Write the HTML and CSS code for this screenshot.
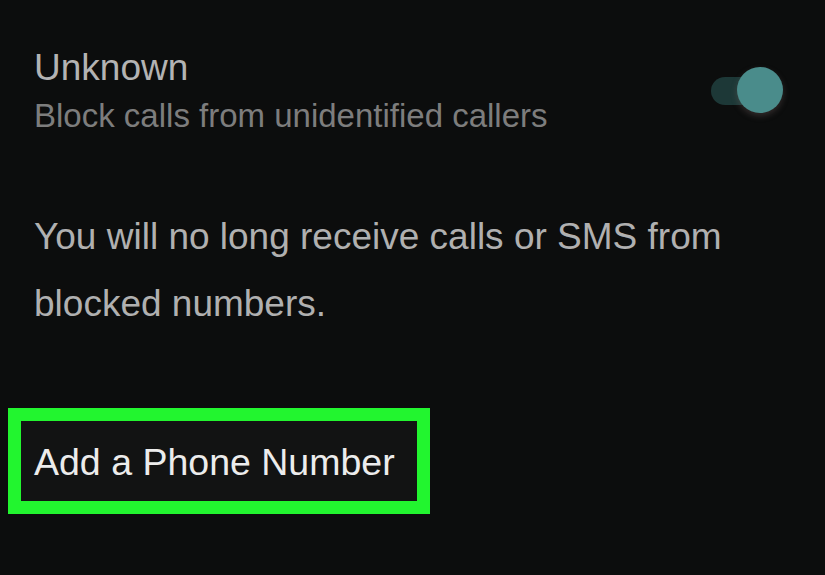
FILE: index.html
```html
<!DOCTYPE html>
<html lang="en">
<head>
    <meta charset="UTF-8">
    <meta name="viewport" content="width=device-width, initial-scale=1.0">
    <title>Blocked Numbers</title>
    <link rel="stylesheet" href="styles.css">
</head>
<body>
    <div class="screen">
        <div class="setting-row">
            <div class="setting-text">
                <div class="setting-title">Unknown</div>
                <div class="setting-desc">Block calls from unidentified callers</div>
            </div>
            <div class="toggle">
                <div class="toggle-track"></div>
                <div class="toggle-knob"></div>
            </div>
        </div>

        <p class="info">You will no long receive calls or SMS from blocked numbers.</p>

        <div class="highlight">
            <button class="add-btn">Add a Phone Number</button>
        </div>
    </div>
</body>
</html>
```

FILE: styles.css
```css
body {
    margin: 0;
    background-color: #0c0d0d;
    font-family: "Liberation Sans", Arial, sans-serif;
}
.screen {
    width: 825px;
    height: 575px;
    overflow: hidden;
    padding: 45px 0 0 34px;
    box-sizing: border-box;
}
.setting-row {
    display: flex;
    align-items: center;
    justify-content: space-between;
    padding-right: 42px;
}
.setting-title {
    font-size: 37px;
    color: #b3b3b3;
    line-height: 46px;
}
.setting-desc {
    font-size: 33px;
    color: #7d7d7d;
    line-height: 44px;
    margin-top: 3px;
}
.toggle {
    position: relative;
    width: 72px;
    height: 46px;
    margin-top: -4px;
}
.toggle-track {
    position: absolute;
    left: 0;
    top: 10px;
    width: 50px;
    height: 28px;
    border-radius: 14px;
    background-color: #1d3837;
}
.toggle-knob {
    position: absolute;
    left: 26px;
    top: 0;
    width: 46px;
    height: 46px;
    border-radius: 50%;
    background-color: #4a8c8b;
    box-shadow: 0 3px 6px rgba(120, 100, 100, 0.35);
}
.info {
    margin: 65px 0 0 0;
    width: 760px;
    font-size: 37px;
    line-height: 67px;
    color: #b0b0b0;
}
.highlight {
    margin: 71px 0 0 -26px;
    width: 396px;
    border: 13px solid #22f52f;
    background-color: #121313;
}
.add-btn {
    display: block;
    background: none;
    border: none;
    padding: 21px 0 19px 13px;
    font-family: "Liberation Sans", Arial, sans-serif;
    font-size: 37.5px;
    line-height: 40px;
    color: #ececec;
    text-align: left;
    cursor: pointer;
}
```
